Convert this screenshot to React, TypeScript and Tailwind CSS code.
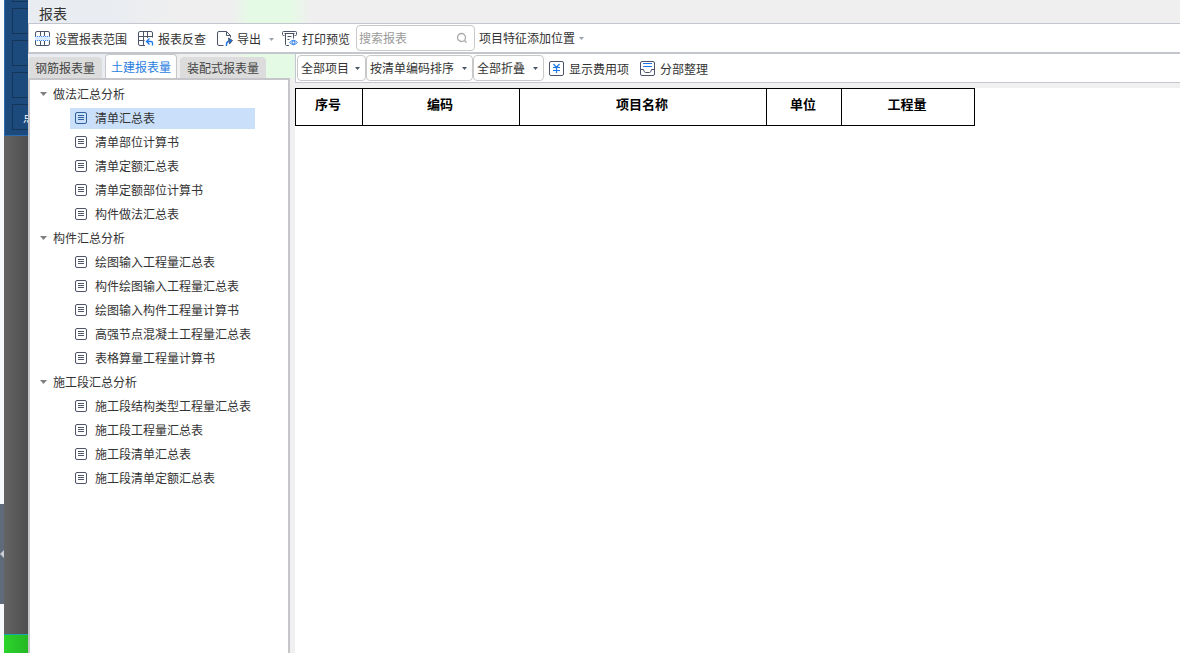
import type { FC, ReactNode } from 'react';
import { useState } from 'react';

type ReportGroup = {
    name: string;
    reports: string[];
};

type DropdownProps = {
    label: string;
    options: string[];
    className: string;
    arrowClassName?: string;
};

const tabs = ['钢筋报表量', '土建报表量', '装配式报表量'];

const groups: ReportGroup[] = [
    {
        name: '做法汇总分析',
        reports: ['清单汇总表', '清单部位计算书', '清单定额汇总表', '清单定额部位计算书', '构件做法汇总表'],
    },
    {
        name: '构件汇总分析',
        reports: [
            '绘图输入工程量汇总表',
            '构件绘图输入工程量汇总表',
            '绘图输入构件工程量计算书',
            '高强节点混凝土工程量汇总表',
            '表格算量工程量计算书',
        ],
    },
    {
        name: '施工段汇总分析',
        reports: ['施工段结构类型工程量汇总表', '施工段工程量汇总表', '施工段清单汇总表', '施工段清单定额汇总表'],
    },
];

const columns = [
    { name: '序号', width: 'w-[67px]' },
    { name: '编码', width: 'w-[157px]' },
    { name: '项目名称', width: 'w-[247px]' },
    { name: '单位', width: 'w-[75px]' },
    { name: '工程量', width: 'w-[133px]' },
];

const RangeIcon: FC = () => (
    <svg width="16" height="16" viewBox="0 0 16 16" fill="none" stroke="#4b5468">
        <path d="M.5 5V2Q.5.5 2 .5H13Q14.500.5 14.500 2V5M.5 10V13Q.5 14.500 2 14.500H13Q14.500 14.500 14.500 13V10M5.500.5V5M9.500.5V5M5.500 10V14.500M9.500 10V14.500" />
        <path d="M0 7.500H15" stroke="#dcebfd" strokeWidth="5" />
        <path d="M0 5.500H15M0 9.500H15" stroke="#3b82e6" strokeDasharray="1 1" />
    </svg>
);

const TraceIcon: FC = () => (
    <svg width="16" height="16" viewBox="0 0 16 16" fill="none" stroke="#4b5468">
        <path d="M14.500 6.500V2Q14.500.5 13 .5H2Q.5.5.5 2V13Q.5 14.500 2 14.500H7M5.500.5V14.500M9.500.5V7M.5 5.500H14.500M.5 9.500H6.500" />
        <path d="M8.500 10.500H13Q14.500 10.500 14.500 12V14.500M11.500 7.500L8.500 10.500L11.500 13.500" stroke="#1f78e8" strokeWidth="1.300" />
    </svg>
);

const ExportIcon: FC = () => (
    <svg width="16" height="16" viewBox="0 0 16 16" fill="none" stroke="#4b5468">
        <path d="M6.500 14.500H2Q.5 14.500.5 13V2Q.5.5 2 .5H9.500L13.500 4.500V6.500M9.500.5V4.500H13.500" />
        <path d="M9.500 15Q9 10.500 12.500 10" stroke="#1f78e8" strokeWidth="1.500" />
        <path d="M11.500 7L15.500 9.500L12.500 13Z" fill="#1f78e8" />
    </svg>
);

const PreviewIcon: FC = () => (
    <svg width="16" height="16" viewBox="0 0 16 16" fill="none" stroke="#4b5468">
        <path d="M2.500 4.500H1.500Q.5 4.500.5 3.500V1.500Q.5.5 1.500.5H13.500Q14.500.5 14.500 1.500V3.500Q14.500 4.500 13.500 4.500H12.500M2.500 2.500H12.500M3.500 3V13.500Q3.500 14.500 4.500 14.500H7M11.500 3V7.500M5.500 5.500H9.500M5.500 8.500H7.500" />
        <path d="M7.500 11.500Q11.500 7 15.500 11.500Q11.500 16 7.500 11.500Z" fill="#e6f0fd" stroke="#4a92ee" />
        <circle cx="11.500" cy="11.500" r="1.500" stroke="#1f78e8" />
    </svg>
);

const FeeIcon: FC = () => (
    <svg width="16" height="16" viewBox="0 0 16 16" fill="none" stroke="#4b5468">
        <rect x=".5" y=".5" width="14" height="14" rx="1.500" />
        <path d="M4.500 3L7.500 6.500L10.500 3M7.500 6.500V12M4 6.500H11M4 9.500H11" stroke="#1f78e8" strokeWidth="1.200" />
    </svg>
);

const SectionIcon: FC = () => (
    <svg width="16" height="16" viewBox="0 0 16 16" fill="none" stroke="#4b5468">
        <rect x=".5" y=".5" width="14" height="14" rx="1.500" />
        <path d="M.5 8.500H3.500Q4 11.500 5.500 11.500H9.500Q11 11.500 11.500 8.500H14.500" />
        <path d="M3 2.500H12M3 5.500H12" stroke="#1f78e8" />
    </svg>
);

const ReportIcon: FC = () => (
    <svg width="12" height="12" viewBox="0 0 12 12" fill="none" stroke="currentColor">
        <rect x=".5" y=".5" width="11" height="11" rx="1.500" />
        <path d="M3 3.500H9M3 5.500H9M3 7.500H9" />
    </svg>
);

const Arrow: FC<{ className?: string }> = ({ className = 'text-gray-600' }) => (
    <svg width="5" height="3" viewBox="0 0 5 3" className={className}>
        <path d="M0 0H5L2.500 3Z" fill="currentColor" />
    </svg>
);

const ToolButton: FC<{ icon: ReactNode; children: ReactNode }> = ({ icon, children }) => (
    <button type="button" className="flex items-center gap-1 pt-[2px] whitespace-nowrap">
        {icon}
        {children}
    </button>
);

const Dropdown: FC<DropdownProps> = ({ label, options, className, arrowClassName }) => (
    <div className="relative flex items-center">
        <select
            aria-label={label}
            className={`h-[26px] appearance-none rounded border bg-white pl-[3px] text-xs ${className}`}
        >
            {options.map(option => (
                <option key={option}>{option}</option>
            ))}
        </select>
        <span className="pointer-events-none absolute right-[6px]">
            <Arrow className={arrowClassName} />
        </span>
    </div>
);

// Strip of the main program that stays visible beside the report window
const Backdrop: FC = () => (
    <div className="flex w-7 shrink-0">
        <div className="flex w-1 flex-col bg-slate-50">
            <div className="h-[504px]" />
            <div className="flex h-[100px] items-center bg-[#5f6b7a]">
                <svg width="4" height="8" viewBox="0 0 4 8">
                    <path d="M4 0V8L0 4Z" fill="#c9ced6" />
                </svg>
            </div>
        </div>
        <div className="flex min-w-0 flex-1 flex-col">
            <div className="flex h-[136px] flex-col gap-[6px] overflow-hidden border-b border-l border-[#2a6cae] bg-[#1c4a7d] pl-[7px]">
                <div className="h-[2px] shrink-0 border-b border-l border-[#143558]" />
                <div className="h-[26px] shrink-0 border border-r-0 border-[#143558]" />
                <div className="h-[26px] shrink-0 border border-r-0 border-[#143558]" />
                <div className="h-[26px] shrink-0 border border-r-0 border-[#143558]" />
                <div className="h-[26px] shrink-0 overflow-hidden border border-r-0 border-[#143558] pl-[10px] text-xs leading-6 text-white">
                    点
                </div>
            </div>
            <div className="flex-1 bg-linear-to-r from-[#646464] to-[#4e4e4e]" />
            <div className="h-[19px] border-t border-[#18a8a8] bg-linear-to-r from-[#2bd42b] to-[#25b825]" />
        </div>
    </div>
);

const App: FC = () => {
    const [activeTab, setActiveTab] = useState('土建报表量');
    const [selected, setSelected] = useState('清单汇总表');
    const [collapsed, setCollapsed] = useState<string[]>([]);
    const [keyword, setKeyword] = useState('');

    const toggleGroup = (name: string) => {
        setCollapsed(prev => (prev.includes(name) ? prev.filter(item => item !== name) : [...prev, name]));
    };

    return (
        <div className="flex min-h-screen bg-white font-['Noto_Sans_CJK_SC',sans-serif] text-xs text-[#333]">
            <Backdrop />

            <div className="flex min-w-0 flex-1 flex-col bg-[linear-gradient(to_right,#e9ecf1_0,#e9ecf1_80px,#efefef_150px,#efefef_205px,#e5fae5_222px,#e5fae5_262px,#efefef_282px)]">
                <header className="flex h-6 shrink-0 items-center border-b border-[#c3c7cf] pt-[2px] pl-[11px]">
                    <h1 className="text-sm">报表</h1>
                </header>

                <div className="flex h-[30px] shrink-0 items-center border-b-2 border-l border-[#c3c7cd] bg-white pl-[6px]">
                    <div className="flex items-center gap-[11px]">
                        <ToolButton icon={<RangeIcon />}>设置报表范围</ToolButton>
                        <ToolButton icon={<TraceIcon />}>报表反查</ToolButton>
                    </div>
                    <div className="ml-[11px] flex items-center gap-2">
                        <ToolButton icon={<ExportIcon />}>
                            导出
                            <span className="pl-1">
                                <Arrow className="text-gray-400" />
                            </span>
                        </ToolButton>
                        <ToolButton icon={<PreviewIcon />}>打印预览</ToolButton>
                    </div>
                    <label className="ml-[6px] flex h-[26px] w-[119px] items-center rounded border border-[#c8c8c8] bg-white pr-[6px] pl-[2px]">
                        <input
                            type="text"
                            aria-label="搜索报表"
                            value={keyword}
                            onChange={e => setKeyword(e.target.value)}
                            placeholder="搜索报表"
                            className="w-full min-w-0 outline-none placeholder:text-[#9a9a9a]"
                        />
                        <svg width="12" height="12" viewBox="0 0 12 12" fill="none" stroke="#aaa" className="shrink-0">
                            <circle cx="5.500" cy="5.500" r="4" strokeWidth="1.300" />
                            <path d="M8.500 8.500L10.500 10.500" strokeWidth="1.500" />
                        </svg>
                    </label>
                    <Dropdown
                        label="特征位置"
                        options={['项目特征添加位置']}
                        className="w-[115px] border-transparent"
                        arrowClassName="text-gray-400"
                    />
                </div>

                <div className="flex flex-1">
                    <aside className="flex w-[262px] shrink-0 flex-col">
                        <div role="tablist" className="flex h-6 items-end gap-[3px]">
                            {tabs.map(tab => (
                                <button
                                    key={tab}
                                    type="button"
                                    role="tab"
                                    aria-selected={tab === activeTab}
                                    onClick={() => setActiveTab(tab)}
                                    className={
                                        tab === activeTab
                                            ? 'h-6 rounded-t border border-b-0 border-[#c8c8cc] bg-white px-[5px] text-[#2a7de1]'
                                            : 'h-[21px] rounded-t bg-[#dcdcdc] px-[7px] text-[#444]'
                                    }
                                >
                                    {tab}
                                </button>
                            ))}
                        </div>
                        <nav className="flex-1 border-2 border-b-0 border-[#c6c6ca] bg-white pt-[2px]">
                            {groups.map(group => (
                                <div key={group.name}>
                                    <button
                                        type="button"
                                        onClick={() => toggleGroup(group.name)}
                                        className="flex h-6 items-center gap-[6px] pl-[10px]"
                                    >
                                        <svg width="7" height="4" viewBox="0 0 7 4">
                                            <path d="M0 0H7L3.500 4Z" fill="#808080" />
                                        </svg>
                                        {group.name}
                                    </button>
                                    {!collapsed.includes(group.name) && (
                                        <ul>
                                            {group.reports.map(report => (
                                                <li key={report} className="flex h-6 items-center pl-10">
                                                    <button
                                                        type="button"
                                                        onClick={() => setSelected(report)}
                                                        className={
                                                            report === selected
                                                                ? 'flex h-[21px] w-[185px] items-center gap-2 bg-[#c9dffa] pl-[5px] whitespace-nowrap'
                                                                : 'flex h-[21px] w-[185px] items-center gap-2 pl-[5px] whitespace-nowrap'
                                                        }
                                                    >
                                                        <span className={report === selected ? 'text-[#305f9e]' : 'text-[#50566a]'}>
                                                            <ReportIcon />
                                                        </span>
                                                        {report}
                                                    </button>
                                                </li>
                                            ))}
                                        </ul>
                                    )}
                                </div>
                            ))}
                        </nav>
                    </aside>

                    <main className="flex min-w-0 flex-1">
                        <div className="flex w-[5px] shrink-0 flex-col">
                            <div className="h-6" />
                            <div className="flex-1 bg-[#f0f0f0]" />
                        </div>
                        <div className="flex min-w-0 flex-1 flex-col bg-[#f0f0f0]">
                            <div className="flex h-[29px] items-center border-b border-l border-[#c3c7cf] bg-white pl-px">
                                <Dropdown label="项目" options={['全部项目']} className="w-[69px] border-[#c8c8c8]" />
                                <Dropdown label="排序" options={['按清单编码排序']} className="w-[107px] border-[#c8c8c8]" />
                                <Dropdown label="折叠" options={['全部折叠']} className="w-[71px] border-[#c8c8c8]" />
                                <div className="ml-[5px] flex gap-[11px]">
                                    <ToolButton icon={<FeeIcon />}>显示费用项</ToolButton>
                                    <ToolButton icon={<SectionIcon />}>分部整理</ToolButton>
                                </div>
                            </div>
                            <div className="mt-[5px] flex-1 bg-white">
                                <table className="w-[680px] table-fixed border-separate border-spacing-0 border-t border-l border-black text-[13px] text-black">
                                    <thead>
                                        <tr>
                                            {columns.map(column => (
                                                <th
                                                    key={column.name}
                                                    scope="col"
                                                    className={`h-[37px] border-r border-b border-black pt-0 pr-[2px] pb-[6px] pl-0 font-bold ${column.width}`}
                                                >
                                                    {column.name}
                                                </th>
                                            ))}
                                        </tr>
                                    </thead>
                                </table>
                            </div>
                        </div>
                    </main>
                </div>
            </div>
        </div>
    );
};

export default App;
